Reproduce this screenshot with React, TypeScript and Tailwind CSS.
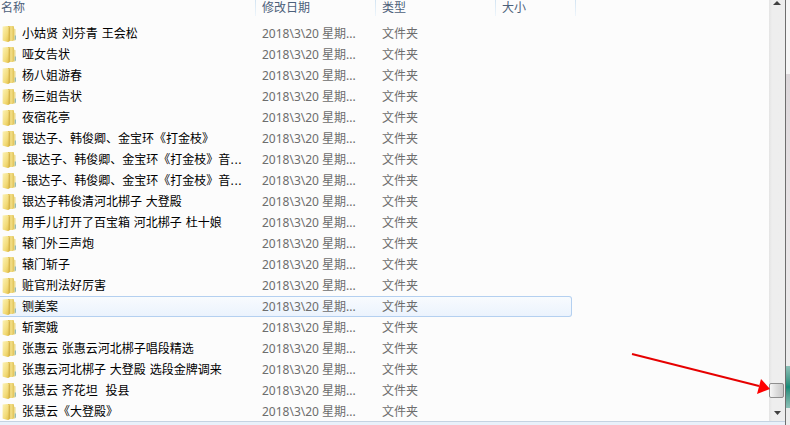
type Column = { label: string; width: string };

const columns: Column[] = [
  { label: "名称", width: "w-[256px] pl-px" },
  { label: "修改日期", width: "w-[120px] pl-1.5" },
  { label: "类型", width: "w-[120px] pl-1.5" },
  { label: "大小", width: "w-[76px] pl-1.5" },
];

const folders = [
  "小姑贤 刘芬青 王会松",
  "哑女告状",
  "杨八姐游春",
  "杨三姐告状",
  "夜宿花亭",
  "银达子、韩俊卿、金宝环《打金枝》",
  "-银达子、韩俊卿、金宝环《打金枝》音...",
  "-银达子、韩俊卿、金宝环《打金枝》音...",
  "银达子韩俊清河北梆子 大登殿",
  "用手儿打开了百宝箱 河北梆子 杜十娘",
  "辕门外三声炮",
  "辕门斩子",
  "赃官刑法好厉害",
  "铡美案",
  "斩窦娥",
  "张惠云 张惠云河北梆子唱段精选",
  "张惠云河北梆子 大登殿 选段金牌调来",
  "张慧云 齐花坦  投县",
  "张慧云《大登殿》",
];

const selected = "铡美案";

function FolderIcon() {
  return (
    <svg className="size-4 shrink-0" viewBox="0 0 16 16" aria-hidden="true">
      <defs>
        <linearGradient id="folder-front" x1="0" y1="0" x2="1" y2="1">
          <stop offset="0" stopColor="#fbf2b4" />
          <stop offset="0.6" stopColor="#f3dc7c" />
          <stop offset="1" stopColor="#e2c14a" />
        </linearGradient>
        <linearGradient id="folder-back" x1="0" y1="0" x2="1" y2="0">
          <stop offset="0" stopColor="#d8b545" />
          <stop offset="0.5" stopColor="#f3df88" />
          <stop offset="1" stopColor="#e0c358" />
        </linearGradient>
      </defs>
      <path d="M7 0h5l1 .6V14.2l-1 .8H7Z" fill="url(#folder-back)" />
      <path d="M13 2.6 14.6 3.2v11l-1.6.6Z" fill="#ecdc94" />
      <path d="M13.8 9.4h1v4l-1 .6Z" fill="#7fb0b4" />
      <path d="M1.6.6 6.6 0 8 1.2V15.8L6.8 16l-4.8-1.2-.4-.4Z" fill="url(#folder-front)" />
      <path d="M8.2 1.4v14" stroke="#c9a53a" strokeWidth="0.8" />
    </svg>
  );
}

function FileRow({ name, active }: { name: string; active: boolean }) {
  const cell = active
    ? "border-y border-[#b4d0f0] bg-linear-to-b from-[#f8fbfe] to-[#ebf3fd]"
    : "border-y border-transparent";

  return (
    <tr className="h-[21px] text-[#6d6d6d]">
      <td className={`${cell} p-0 text-black`}>
        <div className="flex items-center gap-[5px] pl-px font-['DejaVu_Sans','Noto_Sans_CJK_SC',sans-serif]">
          <FolderIcon />
          <span className="whitespace-pre">{name}</span>
        </div>
      </td>
      <td className={`${cell} py-0 pr-0 pl-1.5`}>2018\3\20 星期...</td>
      <td className={`${cell} py-0 pr-0 pl-1.5`}>文件夹</td>
      <td className={`${cell} rounded-r-[3px] p-0 ${active ? "border-r" : ""}`} />
      <td className="p-0" />
    </tr>
  );
}

function Divider() {
  return <span className="h-4 w-px bg-linear-to-b from-[#d3e4f2] to-[#eef5fb]" />;
}

function FileList() {
  return (
    <table className="w-[576px] table-fixed border-separate border-spacing-0 text-left text-xs leading-[18px] whitespace-nowrap">
      <thead>
        <tr className="h-[23px] align-top text-[#4c607a]">
          {columns.map((col, i) => (
            <th key={col.label} className={`${col.width} p-0 leading-4 font-normal`}>
              <div className="flex justify-between">
                <span>{col.label}</span>
                {i < 3 && <Divider />}
              </div>
            </th>
          ))}
          <th className="w-1 p-0">
            <div className="flex justify-end">
              <Divider />
            </div>
          </th>
        </tr>
      </thead>
      <tbody>
        {folders.map((name, i) => (
          <FileRow key={i} name={name} active={name === selected} />
        ))}
      </tbody>
    </table>
  );
}

function ScrollBar() {
  return (
    <div className="flex w-4 flex-col bg-linear-to-r from-[#e4e4e4] to-[#eeeeee] to-20%">
      <button type="button" aria-label="向上滚动" className="flex h-4 w-full justify-center">
        <svg className="h-1.5 w-2" viewBox="0 0 8 6" aria-hidden="true">
          <path d="M4 1 8 5H0Z" fill="#404040" />
        </svg>
      </button>
      <div className="flex w-full flex-1 flex-col justify-end pb-[7px]">
        <div className="h-[15px] w-[15px] rounded-xs border border-[#8e8e8e] bg-linear-to-r from-[#f6f6f6] via-[#dcdcdc] to-[#c8c8c8]" />
      </div>
      <button type="button" aria-label="向下滚动" className="flex h-4 w-full items-center justify-center">
        <svg className="h-1 w-[7px]" viewBox="0 0 7 4" aria-hidden="true">
          <path d="M0 0h7L3.5 4Z" fill="#404040" />
        </svg>
      </button>
    </div>
  );
}

function Pointer() {
  return (
    <svg className="absolute right-5 bottom-[29px] h-12 w-[141px]" viewBox="0 0 141 48" aria-hidden="true">
      <path d="M3 6 130 38" stroke="#e60000" strokeWidth="2" />
      <path d="M132 31 141 41 128 46Z" fill="#ff0000" />
    </svg>
  );
}

export default function App() {
  return (
    <div className="relative flex h-screen overflow-hidden bg-white font-['Noto_Sans','Noto_Sans_CJK_SC',sans-serif]">
      <main className="flex min-w-0 flex-1 flex-col">
        <div className="flex min-h-0 flex-1 bg-[#fcfcfc]">
          <div className="min-w-0 flex-1 overflow-hidden">
            <FileList />
          </div>
          <ScrollBar />
        </div>
        <div className="h-1 border-t border-[#c5d3e2] bg-[#e9f1fa]" />
      </main>
      <div className="w-px bg-[#6e6e6e]" />
      <div className="flex w-1 flex-col bg-[#e8e4e6]">
        <div className="h-[74px] bg-[#f6f6f6]" />
        <div className="flex-1 bg-linear-to-b from-[#dcd7da] via-[#e8e4e6] to-[#ececec]" />
        <div className="h-[42px] bg-linear-to-b from-[#8cc0b7] via-[#128a77] to-[#8cc0b7]" />
        <div className="h-[17px] bg-[#ececec]" />
      </div>
      <Pointer />
    </div>
  );
}
